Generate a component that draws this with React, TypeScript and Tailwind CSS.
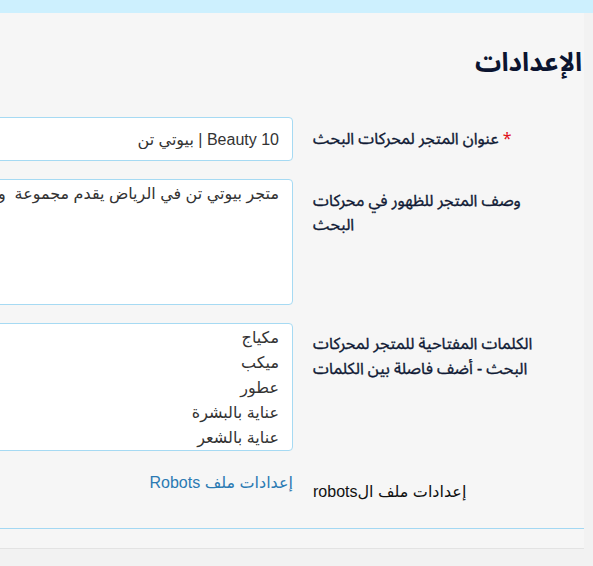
const labelBase =
  "w-[256px] shrink-0 whitespace-nowrap text-left text-[16px] text-[#101a35] [-webkit-text-stroke:0.35px_#101a35] font-['Noto_Sans_Arabic','Noto_Sans','DejaVu_Sans',sans-serif]";
const fieldCls =
  "w-full rounded-[4px] border border-[#a6daf3] bg-white px-[13px] text-[16px] text-[#333] outline-none font-['Liberation_Sans','DejaVu_Sans',sans-serif]";

export default function App() {
  return (
    <div className="min-h-screen bg-[#f2f2f2] font-['Noto_Sans','DejaVu_Sans',sans-serif]">
      <div className="h-[13px] bg-[#cdf0fe]" />

      <div
        dir="rtl"
        className="w-[584px] overflow-hidden border-b border-[#e3e3e3] bg-[#f6f6f6] pt-[33px]"
      >
        <h2 className="pr-[2px] text-[26px] leading-[34px] font-bold text-[#0b1430] font-['Noto_Sans_Arabic','Noto_Sans','DejaVu_Sans',sans-serif]">
          الإعدادات
        </h2>

        <div className="mt-[37px] flex flex-col gap-[18px] pr-[15px]">
          <div className="flex gap-[20px]">
            <label className={`${labelBase} pt-[10px] leading-[24px]`}>
              <span className="text-[#e0101a] [-webkit-text-stroke:0]">*</span> عنوان المتجر لمحركات البحث
            </label>
            <div className="w-[560px] shrink-0">
              <input
                type="text"
                readOnly
                defaultValue="Beauty 10 | بيوتي تن"
                className={`${fieldCls} h-[44px]`}
              />
            </div>
          </div>

          <div className="flex gap-[20px]">
            <label className={`${labelBase} pt-[10px] leading-[24px]`}>
              وصف المتجر للظهور في محركات
              <br />
              البحث
            </label>
            <div className="w-[560px] shrink-0">
              <textarea
                readOnly
                defaultValue="متجر بيوتي تن في الرياض يقدم مجموعة  واسعة من منتجات التجميل"
                className={`${fieldCls} block h-[126px] resize-none overflow-hidden pt-[1px] leading-[25px]`}
              />
            </div>
          </div>

          <div className="flex gap-[20px]">
            <label className={`${labelBase} pt-[9px] leading-[25px]`}>
              الكلمات المفتاحية للمتجر لمحركات
              <br />
              البحث - أضف فاصلة بين الكلمات
            </label>
            <div className="w-[560px] shrink-0">
              <textarea
                readOnly
                defaultValue={"مكياج\nميكب\nعطور\nعناية بالبشرة\nعناية بالشعر"}
                className={`${fieldCls} block h-[128px] resize-none overflow-hidden pt-[1px] leading-[25px]`}
              />
            </div>
          </div>

          <div className="flex gap-[20px]">
            <label className="w-[256px] shrink-0 whitespace-nowrap pt-[11px] text-left text-[16px] leading-[24px] font-normal text-[#111] font-['Liberation_Sans','DejaVu_Sans',sans-serif]">
              إعدادات ملف الrobots
            </label>
            <div className="w-[560px] shrink-0 pt-[2px] text-[16px] leading-[24px] font-['Liberation_Sans','DejaVu_Sans',sans-serif]">
              <a href="#" className="text-[#2b7ab3] hover:underline">
                إعدادات ملف Robots
              </a>
            </div>
          </div>
        </div>

        <div className="mt-[24px] border-t border-[#a3d8f3]" />
        <div className="h-[19px]" />
      </div>
    </div>
  );
}
